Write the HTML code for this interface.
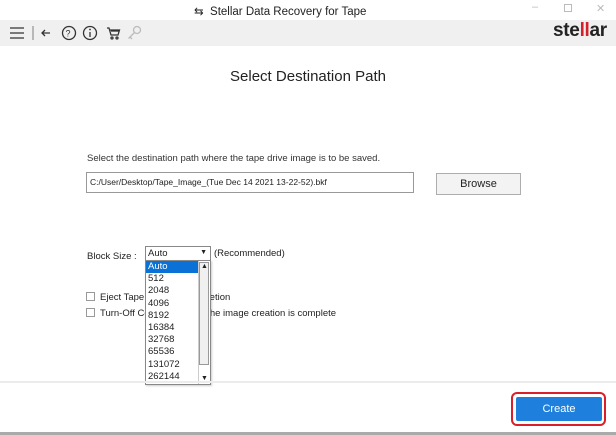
<!DOCTYPE html>
<html><head><style>
*{margin:0;padding:0;box-sizing:border-box}
body{width:616px;height:435px;background:#fff;font-family:"Liberation Sans",sans-serif;position:relative;overflow:hidden;color:#222}
.a{position:absolute}
</style></head><body>
<div class="a" style="left:0;top:0;width:616px;height:20px;background:#fff"></div>
<div class="a" style="left:194px;top:4px;font-size:11.5px;color:#222">⇆&nbsp;&nbsp;Stellar Data Recovery for Tape</div>
<div class="a" style="left:532px;top:1px;font-size:11px;color:#bbb">–</div>
<div class="a" style="left:564px;top:4px;width:8px;height:8px;border:1px solid #bbb"></div>
<div class="a" style="left:596px;top:2px;font-size:11px;color:#bbb">✕</div>
<div class="a" style="left:0;top:20px;width:616px;height:26px;background:#f0f0f0"></div>
<svg class="a" style="left:0;top:20px" width="160" height="26" viewBox="0 0 160 26">
<g stroke="#333" stroke-width="1.3" fill="none">
<path d="M10 8h14M10 13h14M10 18h14"/>
<path d="M33 6v14" stroke="#999"/>
<path d="M50 13h-8M45 10l-3 3 3 3"/>
<circle cx="69" cy="13" r="6.5"/>
<circle cx="90" cy="13" r="6.5"/>
<path d="M90 12v5"/>
<path d="M107 8h2l2 7h7l1.5-5H110"/><path d="M111 11h8"/>
<circle cx="112" cy="18" r="1"/><circle cx="117" cy="18" r="1"/>
<g stroke="#bbb"><circle cx="137" cy="10" r="3.5"/><path d="M134.5 12.5l-6 6M130 17l2 2"/></g>
</g>
<text x="68" y="16.5" font-size="9" text-anchor="middle" fill="#333">?</text>
<circle cx="90" cy="9.5" r="0.9" fill="#333"/>
</svg>
<div class="a" style="left:553px;top:20px;font-size:19px;font-weight:bold;color:#222;letter-spacing:-0.3px">ste<span style="color:#d4202a">ll</span>ar</div>
<div class="a" style="left:0;top:68px;width:616px;text-align:center;font-size:15px;color:#222">Select Destination Path</div>
<div class="a" style="left:87px;top:153px;font-size:9.5px;color:#333">Select the destination path where the tape drive image is to be saved.</div>
<div class="a" style="left:86px;top:172px;width:328px;height:21px;border:1px solid #999;font-size:8.5px;padding:4px 3px;color:#222">C:/User/Desktop/Tape_Image_(Tue Dec 14 2021 13-22-52).bkf</div>
<div class="a" style="left:436px;top:173px;width:85px;height:22px;border:1px solid #adadad;background:#f3f3f3;font-size:11px;text-align:center;line-height:20px">Browse</div>
<div class="a" style="left:87px;top:251px;font-size:9.5px">Block Size :</div>
<div class="a" style="left:214px;top:248px;font-size:9.5px">(Recommended)</div>
<div class="a" style="left:86px;top:292px;width:9px;height:9px;border:1px solid #999"></div>
<div class="a" style="left:100px;top:292px;font-size:9.5px">Eject Tape after the completion</div>
<div class="a" style="left:86px;top:308px;width:9px;height:9px;border:1px solid #999"></div>
<div class="a" style="left:100px;top:308px;font-size:9.5px">Turn-Off Computer when the image creation is complete</div>
<div class="a" style="left:145px;top:246px;width:66px;height:15px;border:1px solid #888;background:#fff;font-size:9.5px;padding:1px 2px">Auto<span style="position:absolute;right:3px;top:2px;font-size:7px">▼</span></div>
<div class="a" style="left:145px;top:260px;width:66px;height:125px;border:1px solid #888;background:#fff;box-shadow:1px 1px 2px rgba(0,0,0,.2);font-size:9.5px;line-height:12.2px">
<div style="background:#0a72d6;color:#fff;padding-left:2px;width:52px">Auto</div>
<div style="padding-left:2px">512<br>2048<br>4096<br>8192<br>16384<br>32768<br>65536<br>131072<br>262144</div>
<div style="position:absolute;left:52px;top:0;width:12px;height:123px;border-left:1px solid #ccc;background:#fff"></div>
<div style="position:absolute;left:53px;top:1px;width:10px;height:103px;border:1px solid #999;background:#f0f0f0"></div>
<div style="position:absolute;left:55px;top:0;font-size:7px">▲</div>
<div style="position:absolute;left:55px;top:112px;font-size:7px">▼</div>
</div>
<div class="a" style="left:0;top:381px;width:616px;height:2px;background:#ececec"></div>
<div class="a" style="left:0;top:432px;width:616px;height:3px;background:#aaa"></div>
<div class="a" style="left:511px;top:392px;width:95px;height:34px;border:2px solid #d9202a;border-radius:6px"></div>
<div class="a" style="left:516px;top:397px;width:86px;height:24px;background:#1e7fdc;border-radius:2px;color:#fff;font-size:11px;text-align:center;line-height:24px">Create</div>
</body></html>
